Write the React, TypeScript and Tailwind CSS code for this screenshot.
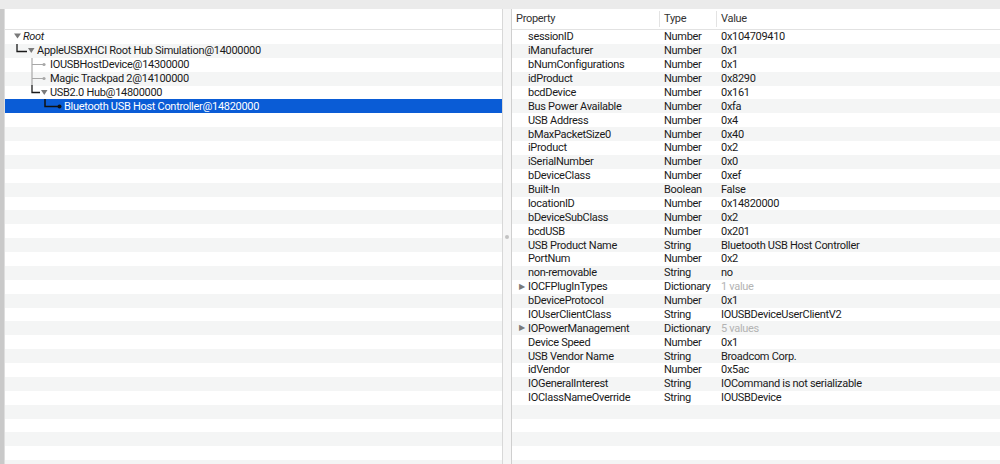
import React from 'react';

type Prop = { name: string; type: string; value: string; expand?: boolean };

const props: Prop[] = [
  { name: 'sessionID', type: 'Number', value: '0x104709410' },
  { name: 'iManufacturer', type: 'Number', value: '0x1' },
  { name: 'bNumConfigurations', type: 'Number', value: '0x1' },
  { name: 'idProduct', type: 'Number', value: '0x8290' },
  { name: 'bcdDevice', type: 'Number', value: '0x161' },
  { name: 'Bus Power Available', type: 'Number', value: '0xfa' },
  { name: 'USB Address', type: 'Number', value: '0x4' },
  { name: 'bMaxPacketSize0', type: 'Number', value: '0x40' },
  { name: 'iProduct', type: 'Number', value: '0x2' },
  { name: 'iSerialNumber', type: 'Number', value: '0x0' },
  { name: 'bDeviceClass', type: 'Number', value: '0xef' },
  { name: 'Built-In', type: 'Boolean', value: 'False' },
  { name: 'locationID', type: 'Number', value: '0x14820000' },
  { name: 'bDeviceSubClass', type: 'Number', value: '0x2' },
  { name: 'bcdUSB', type: 'Number', value: '0x201' },
  { name: 'USB Product Name', type: 'String', value: 'Bluetooth USB Host Controller' },
  { name: 'PortNum', type: 'Number', value: '0x2' },
  { name: 'non-removable', type: 'String', value: 'no' },
  { name: 'IOCFPlugInTypes', type: 'Dictionary', value: '1 value', expand: true },
  { name: 'bDeviceProtocol', type: 'Number', value: '0x1' },
  { name: 'IOUserClientClass', type: 'String', value: 'IOUSBDeviceUserClientV2' },
  { name: 'IOPowerManagement', type: 'Dictionary', value: '5 values', expand: true },
  { name: 'Device Speed', type: 'Number', value: '0x1' },
  { name: 'USB Vendor Name', type: 'String', value: 'Broadcom Corp.' },
  { name: 'idVendor', type: 'Number', value: '0x5ac' },
  { name: 'IOGeneralInterest', type: 'String', value: 'IOCommand is not serializable' },
  { name: 'IOClassNameOverride', type: 'String', value: 'IOUSBDevice' },
];

const tree = [
  { label: 'Root', pad: 'pl-[18px]', italic: true },
  { label: 'AppleUSBXHCI Root Hub Simulation@14000000', pad: 'pl-[32px]' },
  { label: 'IOUSBHostDevice@14300000', pad: 'pl-[45px]' },
  { label: 'Magic Trackpad 2@14100000', pad: 'pl-[45px]' },
  { label: 'USB2.0 Hub@14800000', pad: 'pl-[45px]' },
  { label: 'Bluetooth USB Host Controller@14820000', pad: 'pl-[59px]', selected: true },
];

const stripe = (i: number) => (i % 2 === 1 ? 'bg-[#f4f5f5]' : 'bg-white');

const TreeLines = () => (
  <svg className="absolute left-0 top-0 pointer-events-none" width="80" height="84" viewBox="0 0 80 84">
    <polygon points="9,3.5 16,3.5 12.5,8.5" fill="#7a7a7a" />
    <path d="M12 14 V21.5 H22" stroke="#1a1a1a" strokeWidth="1.3" fill="none" />
    <polygon points="23,18 29.5,18 26.25,23" fill="#7a7a7a" />
    <path d="M27 28 V55" stroke="#a8a8a8" strokeWidth="1.2" fill="none" />
    <path d="M27 34.5 H38 M27 48.5 H38" stroke="#a8a8a8" strokeWidth="1.2" fill="none" />
    <circle cx="39" cy="34.5" r="1.6" fill="#a8a8a8" />
    <circle cx="39" cy="48.5" r="1.6" fill="#a8a8a8" />
    <path d="M27 55 V62.5 H35" stroke="#1a1a1a" strokeWidth="1.3" fill="none" />
    <polygon points="36,60 42.5,60 39.25,65" fill="#7a7a7a" />
    <path d="M40 69 V76.5 H53" stroke="#111" strokeWidth="1.5" fill="none" />
    <circle cx="54.5" cy="76.5" r="2" fill="#111" />
  </svg>
);

export default function App() {
  const emptyLeft = Array.from({ length: 32 - tree.length });
  const emptyRight = Array.from({ length: 32 - props.length });
  return (
    <div className="w-[1000px] h-[464px] overflow-hidden flex flex-col bg-white text-[11px] tracking-[-0.3px] text-[#1a1a1a] font-['Roboto','Liberation_Sans',Arial,sans-serif]">
      <div className="h-[9px] shrink-0 bg-[#ebebeb]" />
      <div className="flex flex-1 min-h-0">
        <div className="w-[4px] shrink-0 bg-[#c9c9c9]" />
        <div className="flex-1 min-w-0 flex flex-col overflow-hidden border-l border-[#dedede]">
          <div className="h-[21px] shrink-0 bg-white border-b border-[#e2e2e2]" />
          <div className="relative flex flex-col">
            {tree.map((t, i) => (
              <div
                key={t.label}
                className={`h-[13.88px] shrink-0 flex items-center whitespace-nowrap leading-none ${t.pad} ${
                  t.selected ? 'bg-[#0a5cd6] text-white' : stripe(i)
                } ${t.italic ? 'italic' : ''}`}
              >
                {t.label}
              </div>
            ))}
            {emptyLeft.map((_, j) => (
              <div key={j} className={`h-[13.88px] shrink-0 ${stripe(j + tree.length)}`} />
            ))}
            <TreeLines />
          </div>
        </div>
        <div className="w-[10px] shrink-0 bg-[#f6f6f6] border-l border-[#d8d8d8] border-r border-r-[#cfcfcf] flex items-center justify-center">
          <div className="w-[4px] h-[4px] rounded-full bg-[#c2c2c2]" />
        </div>
        <div className="w-[488px] shrink-0 flex flex-col overflow-hidden">
          <div className="h-[21px] shrink-0 flex items-center border-b border-[#e2e2e2] text-[#333]">
            <div className="w-[148px] pl-[4px] border-r border-[#e3e3e3] h-[16px] flex items-center">Property</div>
            <div className="w-[57px] pl-[4px] border-r border-[#e3e3e3] h-[16px] flex items-center">Type</div>
            <div className="flex-1 pl-[4px] h-[16px] flex items-center">Value</div>
          </div>
          {props.map((p, i) => (
            <div key={p.name} className={`h-[13.88px] shrink-0 flex items-center whitespace-nowrap leading-none ${stripe(i)}`}>
              <div className="w-[148px] shrink-0 flex items-center">
                <span className="w-[16px] flex justify-end pr-[3px] text-[#7a7a7a] text-[8px]">{p.expand ? '▶' : ''}</span>
                <span>{p.name}</span>
              </div>
              <div className="w-[57px] shrink-0 pl-[4px]">{p.type}</div>
              <div className={`flex-1 pl-[4px] ${p.expand ? 'text-[#b3b3b3]' : ''}`}>{p.value}</div>
            </div>
          ))}
          {emptyRight.map((_, j) => (
            <div key={j} className={`h-[13.88px] shrink-0 ${stripe(j + props.length)}`} />
          ))}
        </div>
      </div>
    </div>
  );
}
